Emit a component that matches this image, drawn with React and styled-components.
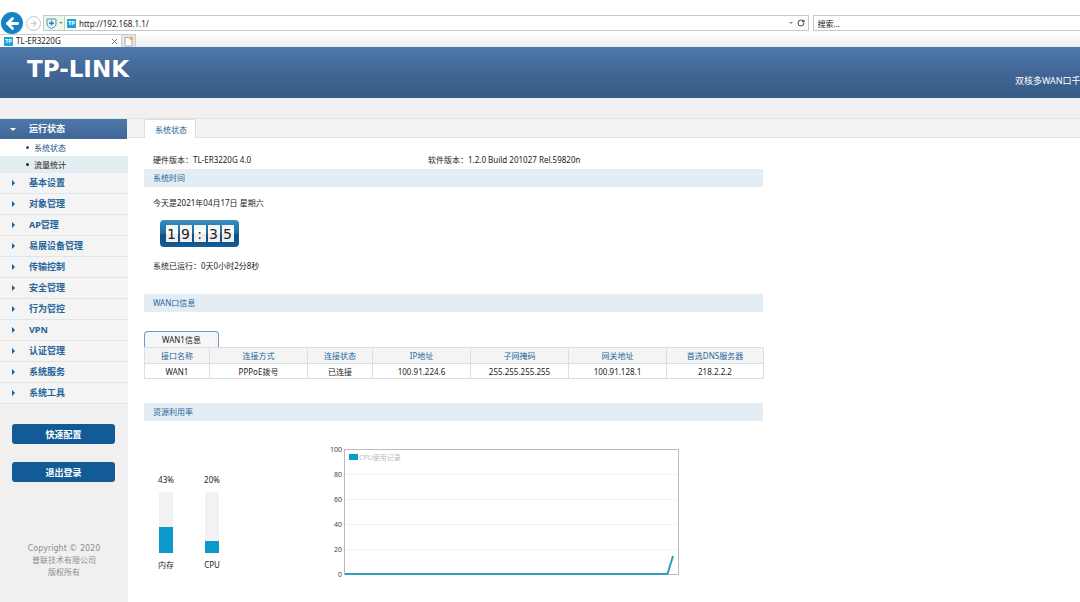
import styled, { createGlobalStyle } from "styled-components";
import { ArrowLeft, ArrowRight, RotateCw } from "lucide-react";

const menu = [
  "基本设置",
  "对象管理",
  "AP管理",
  "易展设备管理",
  "传输控制",
  "安全管理",
  "行为管控",
  "VPN",
  "认证管理",
  "系统服务",
  "系统工具",
];

const wanColumns = [
  { title: "接口名称", value: "WAN1", width: 65 },
  { title: "连接方式", value: "PPPoE拨号", width: 98 },
  { title: "连接状态", value: "已连接", width: 65 },
  { title: "IP地址", value: "100.91.224.6", width: 98 },
  { title: "子网掩码", value: "255.255.255.255", width: 98 },
  { title: "网关地址", value: "100.91.128.1", width: 98 },
  { title: "首选DNS服务器", value: "218.2.2.2", width: 97 },
];

const gauges = [
  { name: "内存", percent: 43 },
  { name: "CPU", percent: 20 },
];

export default function App() {
  return (
    <Page>
      <GlobalStyle />
      <BrowserBar />
      <Header>
        <Logo>TP-LINK</Logo>
        <Slogan>双核多WAN口千兆</Slogan>
      </Header>
      <Strip />
      <Columns>
        <Sidebar />
        <Main>
          <TabStrip>
            <PageTab href="#status">系统状态</PageTab>
          </TabStrip>
          <Content>
            <Versions>
              <span>硬件版本：TL-ER3220G 4.0</span>
              <span>软件版本：1.2.0 Build 201027 Rel.59820n</span>
            </Versions>
            <SectionTitle>系统时间</SectionTitle>
            <TimeSection>
              <p>今天是2021年04月17日 星期六</p>
              <Clock>
                {"19:35".split("").map((char, i) => (
                  <Digit key={i}>{char}</Digit>
                ))}
              </Clock>
              <p>系统已运行：0天0小时2分8秒</p>
            </TimeSection>
            <SectionTitle>WAN口信息</SectionTitle>
            <WanSection>
              <WanTab type="button">WAN1信息</WanTab>
              <WanTable>
                <colgroup>
                  {wanColumns.map((c) => (
                    <Col key={c.title} $width={c.width} />
                  ))}
                </colgroup>
                <thead>
                  <tr>
                    {wanColumns.map((c) => (
                      <th key={c.title}>{c.title}</th>
                    ))}
                  </tr>
                </thead>
                <tbody>
                  <tr>
                    {wanColumns.map((c) => (
                      <td key={c.title}>{c.value}</td>
                    ))}
                  </tr>
                </tbody>
              </WanTable>
            </WanSection>
            <SectionTitle>资源利用率</SectionTitle>
            <Resources>
              <Gauges>
                {gauges.map((g) => (
                  <Gauge key={g.name}>
                    <span>{g.percent}%</span>
                    <GaugeTrack>
                      <GaugeFill style={{ height: `${g.percent}%` }} />
                    </GaugeTrack>
                    <span>{g.name}</span>
                  </Gauge>
                ))}
              </Gauges>
              <CpuChart />
            </Resources>
          </Content>
        </Main>
      </Columns>
    </Page>
  );
}

function BrowserBar() {
  return (
    <Browser>
      <AddressRow>
        <BackButton type="button" aria-label="后退">
          <ArrowLeft size={17} strokeWidth={4} />
        </BackButton>
        <ForwardButton type="button" aria-label="前进">
          <ArrowRight size={9} strokeWidth={3} />
        </ForwardButton>
        <AddressBox>
          <Shield>
            <svg width="11" height="11" viewBox="0 0 11 11" fill="none">
              <path
                d="M1 1h9v5c0 2-2 3.500-4.500 4.500C3 9.500 1 8 1 6z"
                fill="#e4f3fb"
                stroke="#4a94c4"
              />
              <path d="M5.500 2.800v4.800M3.100 5.200h4.800" stroke="#2f7fb8" strokeWidth="1.500" />
            </svg>
            <Caret />
          </Shield>
          <SiteIcon>TP</SiteIcon>
          <AddressInput aria-label="地址" defaultValue="http://192.168.1.1/" />
          <Caret />
          <RefreshButton type="button" aria-label="刷新">
            <RotateCw size={8} strokeWidth={3} />
          </RefreshButton>
        </AddressBox>
        <SearchInput aria-label="搜索" placeholder="搜索..." />
      </AddressRow>
      <BrowserTabs>
        <BrowserTab>
          <SiteIcon>TP</SiteIcon>
          <span>TL-ER3220G</span>
          <CloseButton type="button" aria-label="关闭">
            <svg width="5" height="5" viewBox="0 0 5 5" stroke="#777">
              <path d="M0 0l5 5M5 0L0 5" />
            </svg>
          </CloseButton>
        </BrowserTab>
        <NewTabButton type="button" aria-label="新标签页">
          <svg width="10" height="11" viewBox="0 0 10 11">
            <path d="M1 1.500h4.500l2.500 2.500v6H1z" fill="#fff" stroke="#999" strokeWidth="0.800" />
            <circle cx="7.300" cy="2.500" r="2" fill="#f0b35c" />
          </svg>
        </NewTabButton>
      </BrowserTabs>
    </Browser>
  );
}

function Sidebar() {
  return (
    <SidebarContainer>
      <nav>
        <MenuHead href="#run">
          <Arrow $open />
          运行状态
        </MenuHead>
        <SubItem href="#status" $active>
          系统状态
        </SubItem>
        <SubItem href="#traffic">流量统计</SubItem>
        {menu.map((item) => (
          <MenuItem key={item} href="#menu">
            <Arrow />
            {item}
          </MenuItem>
        ))}
      </nav>
      <SideButtons>
        <SideButton type="button">快速配置</SideButton>
        <SideButton type="button">退出登录</SideButton>
      </SideButtons>
      <Copyright>
        Copyright © 2020
        <br />
        普联技术有限公司
        <br />
        版权所有
      </Copyright>
    </SidebarContainer>
  );
}

function CpuChart() {
  return (
    <Chart width="356" height="134" viewBox="0 0 356 134">
      {[0, 20, 40, 60, 80, 100].map((tick) => {
        const y = 129.5 - tick * 1.25;
        return (
          <g key={tick}>
            <path d={`M17 ${y}H351`} stroke="#f4f4f4" />
            <text x="14" y={y + 2.5} textAnchor="end">
              {tick}
            </text>
          </g>
        );
      })}
      <rect x="16.500" y="4.500" width="334" height="125" fill="none" stroke="#bbb" />
      <rect x="21" y="9" width="9" height="6" fill="#0a9ac8" />
      <text className="legend" x="31" y="15">
        CPU使用记录
      </text>
      <path d="M17 129H339.500L345 111" fill="none" stroke="#2f9dbd" strokeWidth="2" />
    </Chart>
  );
}

const GlobalStyle = createGlobalStyle`
  * {
    box-sizing: border-box;
  }

  body {
    margin: 0;
    background-color: #fff;
    color: #222;
    font-family: "Noto Sans", "Noto Sans CJK SC", sans-serif;
    font-size: 8px;
    line-height: 16px;
  }

  button, input {
    font-family: inherit;
    font-size: inherit;
    padding: 0;
    border: none;
    background: none;
  }

  a {
    text-decoration: none;
  }

  p {
    margin: 0;
  }
`;

const Page = styled.div`
  min-height: 100vh;
  display: flex;
  flex-direction: column;
  overflow: hidden;
`;

const Browser = styled.div`
  padding-top: 12px;
`;

const AddressRow = styled.div`
  height: 22px;
  display: flex;
  align-items: center;
  padding-left: 1px;
`;

const BackButton = styled.button`
  width: 22px;
  height: 22px;
  display: flex;
  align-items: center;
  justify-content: center;
  flex-shrink: 0;
  border-radius: 50%;
  background-color: #1184c4;
  color: #fff;
`;

const ForwardButton = styled.button`
  width: 15px;
  height: 15px;
  display: flex;
  align-items: center;
  justify-content: center;
  flex-shrink: 0;
  margin: 0 2px 0 3px;
  border: 1px solid #c4c4c4;
  border-radius: 50%;
  color: #ccc;
`;

const AddressBox = styled.div`
  height: 16px;
  flex: 32;
  display: flex;
  align-items: center;
  border: 1px solid #c8c8c8;
`;

const Shield = styled.span`
  height: 14px;
  width: 21px;
  display: flex;
  align-items: center;
  justify-content: center;
  gap: 2px;
  margin-right: 2px;
  border-right: 1px solid #b9d6ae;
  background-color: #eef8e8;
`;

const Caret = styled.span`
  border: 2px solid transparent;
  border-top-color: #888;
  border-bottom: none;
`;

const SiteIcon = styled.span`
  width: 9px;
  height: 9px;
  flex-shrink: 0;
  background-color: #18a5dc;
  color: #fff;
  font-size: 6px;
  font-weight: bold;
  line-height: 9px;
  text-align: center;
`;

const AddressInput = styled.input`
  flex: 1;
  min-width: 0;
  height: 14px;
  margin-left: 3px;
  color: #222;
`;

const RefreshButton = styled.button`
  display: flex;
  margin: 0 3px 0 4px;
  color: #444;
`;

const SearchInput = styled.input`
  flex: 11;
  min-width: 0;
  height: 16px;
  margin-left: 4px;
  padding-left: 4px;
  border: 1px solid #c8c8c8;
  border-right: none;

  &::placeholder {
    color: #222;
  }
`;

const BrowserTabs = styled.div`
  height: 13px;
  display: flex;
  background: linear-gradient(#fff, #eceef0);
`;

const BrowserTab = styled.div`
  width: 122px;
  display: flex;
  align-items: center;
  gap: 3px;
  padding: 0 4px;
  border: 1px solid #ccc;
  border-width: 1px 1px 0 0;
  background-color: #fff;
`;

const CloseButton = styled.button`
  display: flex;
  margin-left: auto;
`;

const NewTabButton = styled.button`
  width: 14px;
  display: flex;
  align-items: center;
  justify-content: center;
  border: 1px solid #ccc;
  border-width: 1px 1px 0 0;
  background-color: #e8e8e8;
`;

const Header = styled.header`
  height: 51px;
  display: flex;
  justify-content: space-between;
  padding-left: 27px;
  background: linear-gradient(#4f7bac, #44699a 40%, #365b84);
  color: #fff;
`;

const Logo = styled.div`
  padding-top: 10px;
  font-family: "DejaVu Sans", sans-serif;
  font-size: 23px;
  font-weight: bold;
  line-height: 25px;
`;

const Slogan = styled.div`
  width: 65px;
  padding-top: 26px;
  overflow: hidden;
  font-size: 9px;
  white-space: nowrap;
`;

const Strip = styled.div`
  height: 21px;
  border-bottom: 1px solid #e2e2e2;
  background-color: #f1f1f1;
`;

const Columns = styled.div`
  flex: 1;
  display: flex;
`;

const SidebarContainer = styled.aside`
  width: 128px;
  flex-shrink: 0;
  background-color: #f0f0f0;
`;

const MenuItem = styled.a`
  height: 21px;
  display: flex;
  align-items: center;
  border-bottom: 1px solid #e3e3e3;
  background-color: #f4f4f4;
  color: #24659a;
  font-size: 9px;
  font-weight: bold;
`;

const MenuHead = styled(MenuItem)`
  height: 20px;
  margin-right: 1px;
  border-bottom: none;
  background: linear-gradient(#4c78a9, #3f6797);
  color: #fff;
`;

const Arrow = styled.span`
  width: 0;
  height: 0;
  margin: ${({ $open }) => ($open ? "0 13px 0 10px" : "0 14px 0 12px")};
  border: 3px solid transparent;
  ${({ $open }) =>
    $open
      ? "border-top-color: #fff; border-bottom: none;"
      : "border-left-color: #1c5e94; border-right: none;"}
`;

const SubItem = styled.a`
  height: 17px;
  display: flex;
  align-items: center;
  padding-left: 26px;
  background-color: ${({ $active }) => ($active ? "#fff" : "#e2edf1")};
  color: ${({ $active }) => ($active ? "#24508a" : "#222")};

  &::before {
    content: "";
    width: 3px;
    height: 3px;
    margin-right: 5px;
    border-radius: 50%;
    background-color: currentColor;
  }
`;

const SideButtons = styled.div`
  display: flex;
  flex-direction: column;
  gap: 18px;
  padding: 20px 13px 0 12px;
`;

const SideButton = styled.button`
  height: 20px;
  border-radius: 3px;
  background-color: #125b96;
  color: #fff;
  font-size: 9px;
  font-weight: bold;
`;

const Copyright = styled.p`
  padding-top: 61px;
  color: #8e8e8e;
  font-family: "DejaVu Sans", "Noto Sans CJK SC", sans-serif;
  line-height: 12px;
  text-align: center;
`;

const Main = styled.main`
  flex: 1;
  min-width: 0;
`;

const TabStrip = styled.div`
  height: 19px;
  display: flex;
  padding-left: 16px;
  border-bottom: 1px solid #e2e2e2;
  background-color: #f3f3f3;
`;

const PageTab = styled.a`
  height: 19px;
  padding: 0 8px 0 10px;
  border: 1px solid #ddd;
  border-bottom: none;
  border-radius: 3px 3px 0 0;
  background-color: #fff;
  color: #2a6496;
  line-height: 19px;
`;

const Content = styled.div`
  max-width: 635px;
  padding-left: 16px;
`;

const Versions = styled.div`
  display: grid;
  grid-template-columns: 275px 1fr;
  padding: 14px 0 1px 9px;
`;

const SectionTitle = styled.h2`
  margin: 0;
  padding-left: 9px;
  background-color: #e3edf3;
  color: #24679c;
  font-size: 8px;
  font-weight: normal;
  line-height: 18px;
`;

const TimeSection = styled.section`
  padding: 8px 9px 20px;
`;

const Clock = styled.div`
  width: 79px;
  height: 27px;
  display: flex;
  align-items: center;
  justify-content: center;
  gap: 2px;
  margin: 9px 7px 11px;
  border-radius: 4px;
  background: linear-gradient(#3a8fbd, #1f6ca3 48%, #0f4f86 56%, #125b94);
`;

const Digit = styled.span`
  width: 12px;
  height: 17px;
  background: linear-gradient(#f2f2f2, #fff 48%, #ebebeb 54%, #f2f2f2);
  font-family: "DejaVu Sans", sans-serif;
  font-size: 14px;
  line-height: 18px;
  text-align: center;
`;

const WanSection = styled.section`
  padding: 19px 0 24px;
`;

const WanTab = styled.button`
  width: 75px;
  height: 16px;
  display: block;
  border: 1px solid #6f9cc4;
  border-bottom: none;
  border-radius: 4px 4px 0 0;
  background-color: #f6f6f6;
  color: #222;
`;

const WanTable = styled.table`
  width: 100%;
  table-layout: fixed;
  border-collapse: collapse;

  th,
  td {
    height: 15px;
    padding: 0;
    border: 1px solid #dedede;
    font-weight: normal;
    line-height: 13px;
    text-align: center;
  }

  th {
    height: 16px;
    background-color: #f4f4f4;
    color: #24679c;
  }
`;

const Col = styled.col`
  width: ${({ $width }) => $width}px;
`;

const Resources = styled.section`
  display: grid;
  grid-template-columns: 184px 1fr;
  padding-top: 24px;
`;

const Gauges = styled.div`
  display: flex;
  gap: 10px;
  padding: 27px 0 0 4px;
`;

const Gauge = styled.div`
  width: 36px;
  display: flex;
  flex-direction: column;
  align-items: center;
  gap: 4px;
`;

const GaugeTrack = styled.div`
  width: 14px;
  height: 61px;
  display: flex;
  align-items: flex-end;
  background-color: #f2f2f4;
`;

const GaugeFill = styled.div`
  width: 100%;
  background-color: #0a9acb;
`;

const Chart = styled.svg`
  display: block;
  font-size: 7px;
  fill: #444;

  .legend {
    fill: #bbb;
  }
`;
